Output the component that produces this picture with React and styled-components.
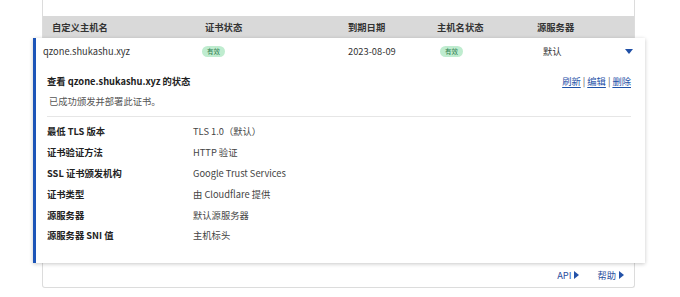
import React from 'react';
import styled, { createGlobalStyle } from 'styled-components';

const GlobalStyle = createGlobalStyle`
  html, body {
    margin: 0;
    padding: 0;
    background: #fff;
  }
  body {
    font-family: "Noto Sans CJK SC", "Noto Sans", sans-serif;
    font-size: 9.3px;
    color: #333;
  }
`;

const Card = styled.div`
  box-sizing: border-box;
  width: 593px;
  margin-left: 42px;
  padding-top: 16px;
  border: 1px solid #dcdcdc;
  border-top: 0;
  border-radius: 0 0 3px 3px;
`;

const HeaderRow = styled.div`
  display: grid;
  grid-template-columns: 153px 143px 89px 100px 1fr;
  align-items: center;
  height: 22px;
  padding-left: 9px;
  background: #d9d9d9;
  font-weight: 700;
  color: #333;
`;

const Panel = styled.div`
  margin: 0 -11px 0 -10px;
  background: #fff;
  border-left: 3px solid #1d55b8;
  box-shadow: 0 1px 4px rgba(0, 0, 0, 0.22);
  position: relative;
`;

const DataRow = styled.div`
  display: grid;
  grid-template-columns: 159px 146px 92px 103px 1fr 24px;
  align-items: center;
  height: 26px;
  padding-left: 7px;
`;

const Badge = styled.span`
  justify-self: start;
  display: inline-block;
  padding: 0 5px;
  height: 11px;
  line-height: 11px;
  border-radius: 6px;
  background: #bfeccf;
  color: #2e7d4f;
  font-size: 6.5px;
`;

const Caret = styled.svg`
  width: 8px;
  height: 5px;
  justify-self: start;
  margin-left: 4px;
`;

const Detail = styled.div`
  padding: 7px 14px 17px 11px;
`;

const TitleRow = styled.div`
  display: flex;
  justify-content: space-between;
  align-items: center;
  height: 20px;
`;

const Title = styled.div`
  font-weight: 700;
  color: #222;
`;

const Links = styled.div`
  display: flex;
  gap: 2px;
  color: #555;
`;

const LinkText = styled.a`
  color: #1f52a8;
  text-decoration: underline;
  text-underline-offset: 2px;
  cursor: pointer;
`;

const Note = styled.div`
  line-height: 20px;
  color: #555;
  padding-left: 2px;
`;

const Divider = styled.div`
  margin-top: 5px;
  border-bottom: 1px solid #e6e6e6;
`;

const InfoList = styled.div`
  margin-top: 4px;
`;

const InfoRow = styled.div`
  display: grid;
  grid-template-columns: 146px 1fr;
  align-items: center;
  height: 20.8px;
`;

const Label = styled.div`
  font-weight: 700;
  color: #222;
`;

const Value = styled.div`
  color: #444;
`;

const Footer = styled.div`
  display: flex;
  justify-content: flex-end;
  align-items: center;
  gap: 18px;
  height: 24px;
  padding-right: 10px;
`;

const FooterLink = styled.a`
  display: flex;
  align-items: center;
  gap: 3px;
  color: #2b4f9e;
  font-size: 9.3px;
`;

const Arrow = () => (
  <svg width="5" height="8" viewBox="0 0 5 8">
    <path d="M0 0 L5 4 L0 8 Z" fill="#2352a8" />
  </svg>
);

const columns = ['自定义主机名', '证书状态', '到期日期', '主机名状态', '源服务器'];

const details = [
  ['最低 TLS 版本', 'TLS 1.0（默认）'],
  ['证书验证方法', 'HTTP 验证'],
  ['SSL 证书颁发机构', 'Google Trust Services'],
  ['证书类型', '由 Cloudflare 提供'],
  ['源服务器', '默认源服务器'],
  ['源服务器 SNI 值', '主机标头'],
];

const App = () => {
  return (
    <>
      <GlobalStyle />
      <Card>
        <HeaderRow>
          {columns.map((c) => (
            <div key={c}>{c}</div>
          ))}
        </HeaderRow>
        <Panel>
          <DataRow>
            <div>qzone.shukashu.xyz</div>
            <Badge>有效</Badge>
            <div>2023-08-09</div>
            <Badge>有效</Badge>
            <div>默认</div>
            <Caret viewBox="0 0 8 5">
              <path d="M0 0 H8 L4 5 Z" fill="#1f4fa6" />
            </Caret>
          </DataRow>
          <Detail>
            <TitleRow>
              <Title>查看 qzone.shukashu.xyz 的状态</Title>
              <Links>
                <LinkText>刷新</LinkText>|<LinkText>编辑</LinkText>|<LinkText>删除</LinkText>
              </Links>
            </TitleRow>
            <Note>已成功颁发并部署此证书。</Note>
            <Divider />
            <InfoList>
              {details.map(([k, v]) => (
                <InfoRow key={k}>
                  <Label>{k}</Label>
                  <Value>{v}</Value>
                </InfoRow>
              ))}
            </InfoList>
          </Detail>
        </Panel>
        <Footer>
          <FooterLink>
            API <Arrow />
          </FooterLink>
          <FooterLink>
            帮助 <Arrow />
          </FooterLink>
        </Footer>
      </Card>
    </>
  );
};

export default App;
